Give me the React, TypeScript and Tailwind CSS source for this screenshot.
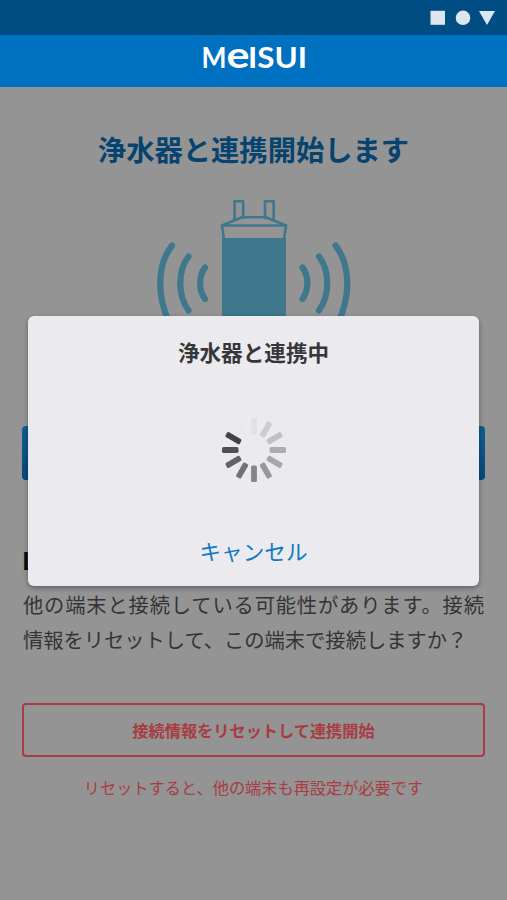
const WAVES = [
  "M32.5 55.5 C19 73 16 102 29.5 132",
  "M49 66.5 C38 81 38 105 49 120.5",
  "M65.5 77.5 C59 86 59 100 65.5 109",
];

const SPOKES = [
  "#e1e1e4",
  "#cdcdcf",
  "#c1c1c3",
  "#adadaf",
  "#a7a7a9",
  "#98989a",
  "#858587",
  "#727274",
  "#636365",
  "#4f4f51",
  "#434345",
  "#e9e9ed",
];

function StatusBar() {
  return (
    <div className="flex h-[35px] items-center justify-end bg-[#004d84] pr-3">
      <svg width="66" height="16" viewBox="0 0 66 16" fill="#dce6f0">
        <rect x="1.5" y="0.8" width="14.5" height="14" />
        <circle cx="34" cy="7.8" r="7.3" />
        <path d="M50 1h16l-8 14z" />
      </svg>
    </div>
  );
}

function Header() {
  return (
    <header className="flex h-[52px] items-start justify-center bg-[#0070c0]">
      <svg
        width="104"
        height="46"
        viewBox="0 0 104 46"
        fill="#ffffff"
        className="overflow-visible font-['Lato','Liberation_Sans',sans-serif] font-bold"
      >
        <text x="-0.5" y="33" fontSize="28" textLength="25" lengthAdjust="spacingAndGlyphs">M</text>
        <text x="24.5" y="33" fontSize="37" textLength="23" lengthAdjust="spacingAndGlyphs">e</text>
        <text x="46" y="33" fontSize="28" textLength="59" lengthAdjust="spacingAndGlyphs">ISUI</text>
      </svg>
    </header>
  );
}

function Purifier() {
  return (
    <svg
      width="230"
      height="150"
      viewBox="0 0 230 150"
      fill="none"
      stroke="#3f778d"
      strokeLinejoin="round"
      strokeLinecap="round"
    >
      <path strokeWidth="2.6" d="M95.5 30V11.3h8.7V28M126 28V11.3h8.7V30" />
      <path strokeWidth="2.6" d="M83 35.5 L103 27.3 H127 L147 35.5 Z" />
      <path strokeWidth="2.6" d="M83 35.5 L85 49.5 H145 L147 35.5" />
      <path fill="#3f778d" stroke="none" d="M83 48h64v92H83z" />
      <g strokeWidth="6.2" transform="translate(0.5 0)">
        {WAVES.map((d) => (
          <path key={d} d={d} />
        ))}
        <g transform="translate(228.5 0) scale(-1 1)">
          {WAVES.map((d) => (
            <path key={d} d={d} />
          ))}
        </g>
      </g>
    </svg>
  );
}

function Spinner() {
  return (
    <svg width="66" height="66" viewBox="-33 -33 66 66">
      {SPOKES.map((color, i) => (
        <rect key={i} x="-2.9" y="-32" width="5.8" height="16.5" rx="1.6" fill={color} transform={`rotate(${i * 30})`} />
      ))}
    </svg>
  );
}

function ConnectingDialog() {
  return (
    <div
      role="dialog"
      className="absolute left-[28px] top-[316px] flex h-[270px] w-[451px] flex-col items-center rounded-[6px] bg-[#ebebef] shadow-[0_2px_5px_rgba(0,0,0,0.35)]"
    >
      <h2 className="mt-[21px] text-[21.6px] font-bold leading-[30px] text-[#373739]">浄水器と連携中</h2>
      <div className="mt-[50px]">
        <Spinner />
      </div>
      <button type="button" className="mt-[53px] text-[21.6px] leading-[30px] text-[#0f7ac4]">
        キャンセル
      </button>
    </div>
  );
}

export default function App() {
  return (
    <div className="relative flex h-[900px] w-[507px] flex-col overflow-hidden bg-[#949494] font-['Noto_Sans_CJK_JP',sans-serif]">
      <StatusBar />
      <Header />
      <main className="flex flex-col px-[22px] pt-[42px]">
        <h1 className="text-center text-[28.3px] font-bold leading-[40px] text-[#07436f]">浄水器と連携開始します</h1>
        <div className="mt-[21px] flex justify-center">
          <Purifier />
        </div>
        <button type="button" className="mt-[86px] h-[54px] rounded-[4px] bg-linear-to-b from-[#0f5e94] to-[#074a7b]" />
        <h3 className="mt-[64px] text-[24px] font-bold leading-[32px] text-[#0c0c0c]">LED</h3>
        <p className="mt-[11px] px-px text-justify text-[20.28px] leading-[35px] text-[#343434]">
          他の端末と接続している可能性があります。接続情報をリセットして、この端末で接続しますか？
        </p>
        <button
          type="button"
          className="mt-[46px] h-[54px] rounded-[4px] border-2 border-[#a83c42] text-[16.2px] font-bold text-[#a83c42]"
        >
          接続情報をリセットして連携開始
        </button>
        <p className="mt-[18px] text-center text-[16.2px] leading-6 text-[#a83c42]">
          リセットすると、他の端末も再設定が必要です
        </p>
      </main>
      <ConnectingDialog />
    </div>
  );
}
